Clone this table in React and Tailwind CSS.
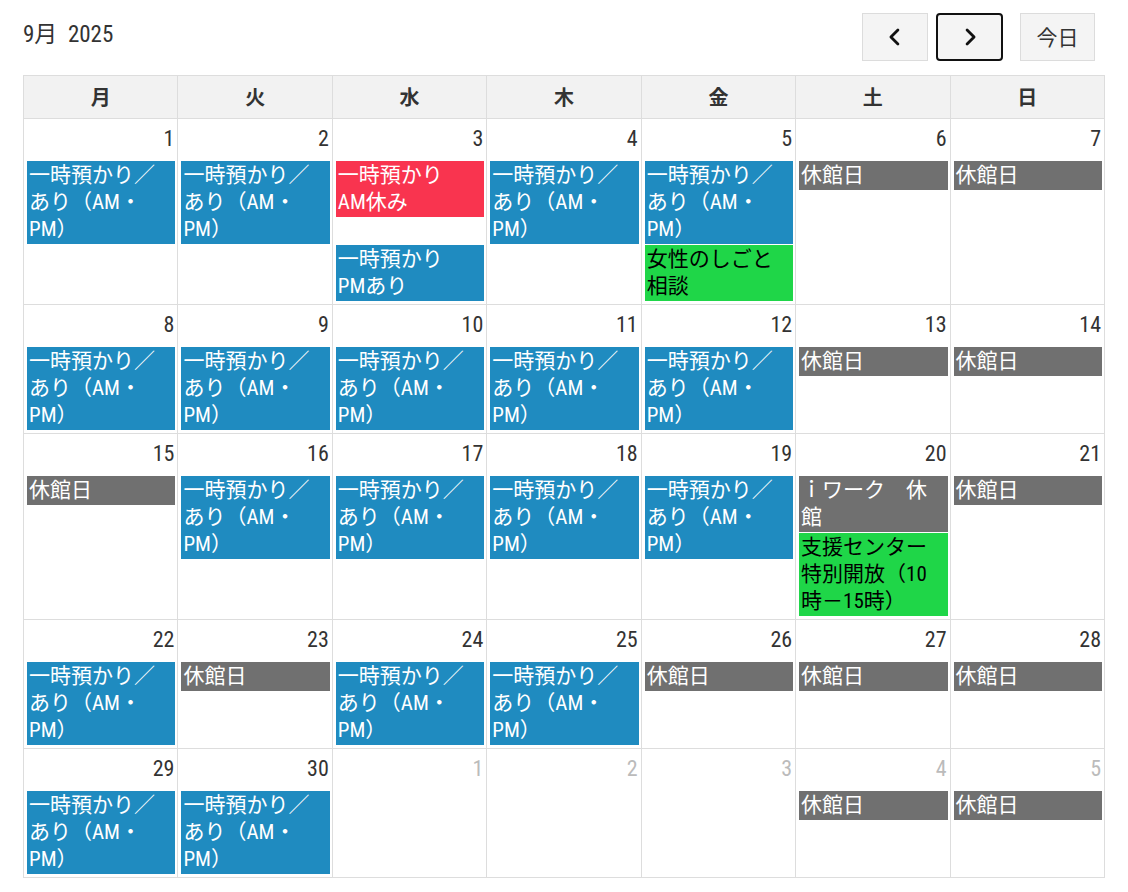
import React from "react";

const B = "bg-[#1f8bc0] border-[#1f8bc0] text-white";
const R = "bg-[#f9344f] border-[#f9344f] text-white";
const G = "bg-[#1fd648] border-[#1fd648] text-black";
const K = "bg-[#707070] border-[#707070] text-white";

const a = { c: B, t: "一時預かり／あり（AM・PM）" };
const h = { c: K, t: "休館日" };

const weeks = [
  [
    { d: 1, e: [a] },
    { d: 2, e: [a] },
    { d: 3, e: [{ c: R, t: ["一時預かり", "AM休み"] }, { c: B, t: ["一時預かり", "PMあり"], gap: true }] },
    { d: 4, e: [a] },
    { d: 5, e: [a, { c: G, t: "女性のしごと相談" }] },
    { d: 6, e: [h] },
    { d: 7, e: [h] },
  ],
  [
    { d: 8, e: [a] },
    { d: 9, e: [a] },
    { d: 10, e: [a] },
    { d: 11, e: [a] },
    { d: 12, e: [a] },
    { d: 13, e: [h] },
    { d: 14, e: [h] },
  ],
  [
    { d: 15, e: [h] },
    { d: 16, e: [a] },
    { d: 17, e: [a] },
    { d: 18, e: [a] },
    { d: 19, e: [a] },
    { d: 20, e: [{ c: K, t: "ｉワーク　休館" }, { c: G, t: "支援センター特別開放（10時－15時）" }] },
    { d: 21, e: [h] },
  ],
  [
    { d: 22, e: [a] },
    { d: 23, e: [h] },
    { d: 24, e: [a] },
    { d: 25, e: [a] },
    { d: 26, e: [h] },
    { d: 27, e: [h] },
    { d: 28, e: [h] },
  ],
  [
    { d: 29, e: [a] },
    { d: 30, e: [a] },
    { d: 1, o: true, e: [] },
    { d: 2, o: true, e: [] },
    { d: 3, o: true, e: [] },
    { d: 4, o: true, e: [h] },
    { d: 5, o: true, e: [h] },
  ],
];

const days = ["月", "火", "水", "木", "金", "土", "日"];

const font = { fontFamily: "'Roboto Condensed','Liberation Sans Narrow','Roboto','Noto Sans CJK JP',sans-serif" };

function Event({ ev }) {
  return (
    <div
      className={`${ev.c} ${ev.gap ? "mt-[27px]" : ""} ml-[3px] mr-[2px] border px-[1px] text-[21px] leading-[27px]`}
    >
      {Array.isArray(ev.t) ? ev.t.map((s, i) => <div key={i}>{s}</div>) : ev.t}
    </div>
  );
}

export default function App() {
  return (
    <div className="w-[1128px] bg-white px-[23px] pt-[13px] text-[#333]" style={font}>
      <div className="flex items-start justify-between h-[48px] mb-[14px]">
        <div className="mt-[9px] text-[23px] leading-[26px] text-[#333]">9月&nbsp;&nbsp;2025</div>
        <div className="flex items-start mr-[10px]">
          <button className="w-[66px] h-[48px] flex items-center justify-center bg-[#f4f4f4] border border-[#dcdcdc]">
            <svg width="28" height="28" viewBox="0 0 24 24" fill="none" stroke="#111" strokeWidth="2.4" strokeLinecap="round" strokeLinejoin="round">
              <path d="M14.5 6l-6 6 6 6" />
            </svg>
          </button>
          <button className="ml-[8px] w-[67px] h-[48px] flex items-center justify-center bg-[#f4f4f4] border-2 border-[#111] rounded-[4px]">
            <svg width="28" height="28" viewBox="0 0 24 24" fill="none" stroke="#111" strokeWidth="2.4" strokeLinecap="round" strokeLinejoin="round">
              <path d="M9.5 6l6 6-6 6" />
            </svg>
          </button>
          <button className="ml-[17px] w-[75px] h-[48px] flex items-center justify-center bg-[#f4f4f4] border border-[#dcdcdc] text-[21px] text-[#333]" style={{ fontFamily: "'Noto Sans CJK JP',sans-serif" }}>
            今日
          </button>
        </div>
      </div>
      <table className="w-[1082px] table-fixed border-collapse">
        <thead>
          <tr>
            {days.map((d) => (
              <th
                key={d}
                className="h-[43px] border border-[#dddddd] bg-[#f2f2f2] text-[20px] font-bold text-[#333] p-0"
                style={{ fontFamily: "'Noto Sans CJK JP',sans-serif" }}
              >
                {d}
              </th>
            ))}
          </tr>
        </thead>
        <tbody>
          {weeks.map((w, wi) => (
            <tr key={wi}>
              {w.map((c, ci) => (
                <td key={ci} className="border border-[#dddddd] p-0 align-top">
                  <div className="min-h-[128px] pb-[3px] flex flex-col gap-[1px]">
                    <div className={`h-[41px] pt-[7px] pr-[3px] text-right text-[22px] leading-[26px] ${c.o ? "text-[#bbbbbb]" : "text-[#333]"}`}>
                      {c.d}
                    </div>
                    {c.e.map((ev, ei) => (
                      <Event key={ei} ev={ev} />
                    ))}
                  </div>
                </td>
              ))}
            </tr>
          ))}
        </tbody>
      </table>
    </div>
  );
}
